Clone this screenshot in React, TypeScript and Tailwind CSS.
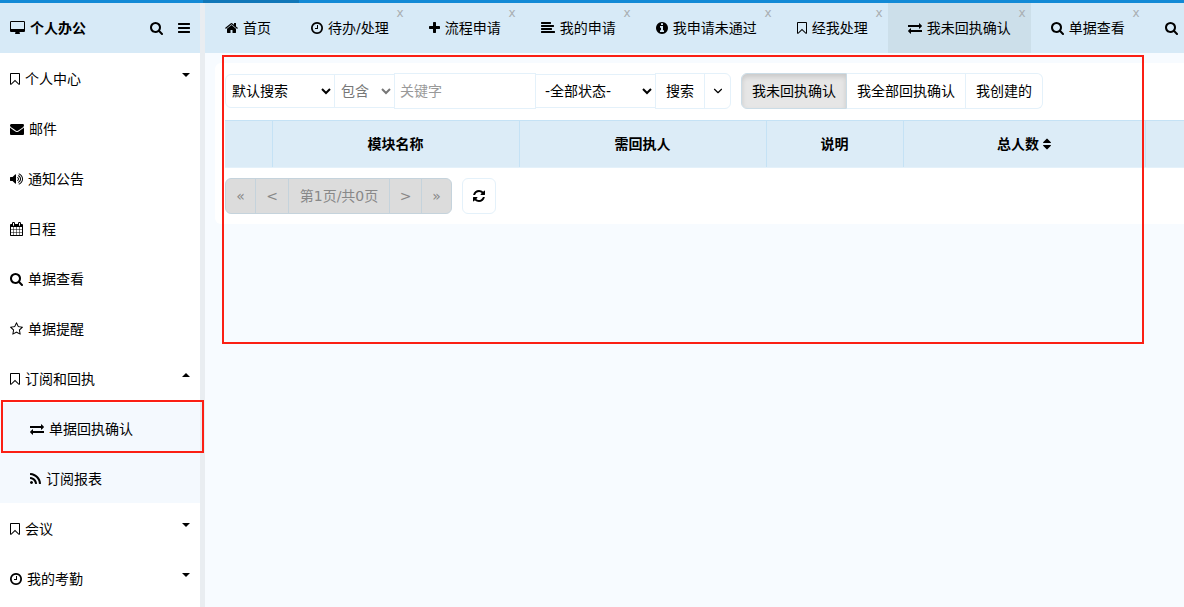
import type { ReactNode } from "react";
import { FiChevronDown } from "react-icons/fi";

type IconName = keyof typeof ICONS;

const CIRCLE = "q0 209-103 385.5t-279.5 279.5-385.5 103-385.5-103-279.5-279.5-103-385.5 103-385.5 279.5-279.5 385.5-103 385.5 103 279.5 279.5 103 385.5z";

// x = left edge of the glyph, w = advance width, on a 1792 unit em
const ICONS = {
  desktop: { x: -64, w: 1920, d: "M1728 992v-832q0-13-9.500-22.500t-22.500-9.500h-1600q-13 0-22.500 9.500t-9.500 22.500v832q0 13 9.500 22.500t22.500 9.500h1600q13 0 22.500-9.500t9.500-22.500zm128-832v1088q0 66-47 113t-113 47h-544q0 37 16 77.500t32 71 16 43.500q0 26-19 45t-45 19h-512q-26 0-45-19t-19-45q0-14 16-44t32-70 16-78h-544q-66 0-113-47t-47-113v-1088q0-66 47-113t113-47h1600q66 0 113 47t47 113z" },
  search: { x: 64, w: 1664, d: "M1216 832q0-185-131.500-316.500t-316.500-131.500-316.500 131.500-131.500 316.500 131.500 316.500 316.500 131.500 316.500-131.500 131.500-316.500zm512 832q0 52-38 90t-90 38q-54 0-90-38l-343-342q-179 124-399 124-143 0-273.500-55.500t-225-150-150-225-55.500-273.500 55.500-273.500 150-225 225-150 273.500-55.500 273.500 55.500 225 150 150 225 55.500 273.500q0 220-124 399l343 343q37 37 37 90z" },
  bars: { x: 128, w: 1536, d: "M1664 1344v128q0 26-19 45t-45 19h-1408q-26 0-45-19t-19-45v-128q0-26 19-45t45-19h1408q26 0 45 19t19 45zm0-512v128q0 26-19 45t-45 19h-1408q-26 0-45-19t-19-45v-128q0-26 19-45t45-19h1408q26 0 45 19t19 45zm0-512v128q0 26-19 45t-45 19h-1408q-26 0-45-19t-19-45v-128q0-26 19-45t45-19h1408q26 0 45 19t19 45z" },
  bookmark: { x: 256, w: 1280, d: "M1408 256h-1024v1242l423-406 89-85 89 85 423 406v-1242zm12-128q23 0 44 9 33 13 52.500 41t19.500 62v1289q0 34-19.500 62t-52.500 41q-19 8-44 8-48 0-83-32l-441-424-441 424q-36 33-83 33-23 0-44-9-33-13-52.500-41t-19.500-62v-1289q0-34 19.500-62t52.500-41q21-9 44-9h1048z" },
  envelope: { x: 0, w: 1792, d: "M1792 710v794q0 66-47 113t-113 47h-1472q-66 0-113-47t-47-113v-794q44 49 101 87 362 246 497 345 57 42 92.500 65.500t94.500 48 110 24.500h2q51 0 110-24.500t94.500-48 92.500-65.500q170-123 498-345 57-39 100-87zm0-294q0 79-49 151t-122 123q-376 261-468 325-10 7-42.500 30.500t-54 38-52 32.500-57.500 27-50 9h-2q-23 0-50-9t-57.500-27-52-32.500-54-38-42.500-30.500q-91-64-262-182.500t-205-142.500q-62-42-117-115.500t-55-136.500q0-78 41.500-130t118.500-52h1472q65 0 112.500 47t47.500 113z" },
  volume: { x: 64, w: 1664, d: "M832 352v1088q0 26-19 45t-45 19-45-19l-333-333h-262q-26 0-45-19t-19-45v-384q0-26 19-45t45-19h262l333-333q19-19 45-19t45 19 19 45zm384 544q0 76-42.500 141.500t-112.500 93.500q-10 5-25 5-26 0-45-18.500t-19-45.500q0-21 12-35.500t29-25 34-23 29-36 12-56.500-12-56.500-29-36-34-23-29-25-12-35.500q0-27 19-45.500t45-18.500q15 0 25 5 70 27 112.500 93t42.500 142zm256 0q0 153-85 282.500t-225 188.500q-13 5-25 5-27 0-46-19t-19-45q0-39 39-59 56-29 76-44 74-54 115.500-135.500t41.500-173.500-41.500-173.500-115.500-135.500q-20-15-76-44-39-20-39-59 0-26 19-45t45-19q13 0 26 5 140 59 225 188.500t85 282.500zm256 0q0 230-127 422.500t-338 283.500q-13 5-26 5-26 0-45-19t-19-45q0-36 39-59 7-4 22.500-10.500t22.500-10.500q46-25 82-51 123-91 192-227t69-289-69-289-192-227q-36-26-82-51-7-4-22.500-10.500t-22.500-10.500q-39-23-39-59 0-26 19-45t45-19q13 0 26 5 211 91 338 283.500t127 422.500z" },
  calendar: { x: 64, w: 1664, d: "M192 1664h288v-288h-288v288zm352 0h320v-288h-320v288zm-352-352h288v-320h-288v320zm352 0h320v-320h-320v320zm-352-384h288v-288h-288v288zm736 736h320v-288h-320v288zm-384-736h320v-288h-320v288zm768 736h288v-288h-288v288zm-384-352h320v-320h-320v320zm-352-864v-288q0-13-9.500-22.500t-22.500-9.500h-64q-13 0-22.500 9.500t-9.500 22.500v288q0 13 9.500 22.500t22.500 9.500h64q13 0 22.500-9.500t9.500-22.500zm736 864h288v-320h-288v320zm-384-384h320v-288h-320v288zm384 0h288v-288h-288v288zm32-480v-288q0-13-9.500-22.500t-22.500-9.500h-64q-13 0-22.500 9.500t-9.500 22.500v288q0 13 9.500 22.500t22.500 9.500h64q13 0 22.500-9.500t9.500-22.500zm384-64v1280q0 52-38 90t-90 38h-1408q-52 0-90-38t-38-90v-1280q0-52 38-90t90-38h128v-96q0-66 47-113t113-47h64q66 0 113 47t47 113v96h384v-96q0-66 47-113t113-47h64q66 0 113 47t47 113v96h128q52 0 90 38t38 90z" },
  star: { x: 64, w: 1664, d: "M1201 1004l306-297-422-62-189-382-189 382-422 62 306 297-73 421 378-199 377 199zm527-357q0 22-26 48l-363 354 86 500q1 7 1 20 0 50-41 50-19 0-40-12l-449-236-449 236q-22 12-40 12-21 0-31.500-14.500t-10.500-35.500q0-6 2-20l86-500-364-354q-25-27-25-48 0-37 56-46l502-73 225-455q19-41 49-41t49 41l225 455 502 73q56 9 56 46z" },
  exchange: { x: 0, w: 1792, d: "M1792 1184v192q0 13-9.500 22.500t-22.500 9.500h-1376v192q0 13-9.500 22.500t-22.500 9.500q-12 0-24-10l-319-320q-9-9-9-22 0-14 9-23l320-320q9-9 23-9 13 0 22.500 9.500t9.500 22.500v192h1376q13 0 22.500 9.500t9.500 22.500zm0-544q0 14-9 23l-320 320q-9 9-23 9-13 0-22.500-9.500t-9.500-22.500v-192h-1376q-13 0-22.500-9.500t-9.500-22.500v-192q0-13 9.500-22.500t22.500-9.500h1376v-192q0-14 9-23t23-9q12 0 24 10l319 319q9 9 9 23z" },
  rss: { x: 192, w: 1408, d: "M576 1344q0 80-56 136t-136 56-136-56-56-136 56-136 136-56 136 56 56 136zm512 123q2 28-17 48-18 21-47 21h-135q-25 0-43-16.500t-20-41.500q-22-229-184.500-391.500t-391.500-184.500q-25-2-41.500-20t-16.500-43v-135q0-29 21-47 17-17 43-17h5q160 13 306 80.500t259 181.500q114 113 181.500 259t80.500 306zm512 2q2 27-18 47-18 20-46 20h-143q-26 0-44.500-17.500t-19.500-42.500q-12-215-101-408.500t-231.500-336-336-231.500-408.500-102q-25-1-42.500-19.500t-17.500-43.500v-143q0-28 20-46 18-18 44-18h3q262 13 501.500 120t425.500 294q187 186 294 425.500t120 501.500z" },
  clock: { x: 128, w: 1536, d: "M1024 544v448q0 14-9 23t-23 9h-320q-14 0-23-9t-9-23v-64q0-14 9-23t23-9h224v-352q0-14 9-23t23-9h64q14 0 23 9t9 23zm416 352q0-148-73-273t-198-198-273-73-273 73-198 198-73 273 73 273 198 198 273 73 273-73 198-198 73-273zm224 0" + CIRCLE },
  home: { x: 64, w: 1664, d: "M1472 992v480q0 26-19 45t-45 19h-384v-384h-256v384h-384q-26 0-45-19t-19-45v-480q0-1 .5-3t.5-3l575-474 575 474q1 2 1 6zm223-69l-62 74q-8 9-21 11h-3q-13 0-21-7l-692-577-692 577q-12 8-24 7-13-2-21-11l-62-74q-8-10-7-23.500t11-21.500l719-599q32-26 76-26t76 26l244 204v-195q0-14 9-23t23-9h192q14 0 23 9t9 23v408l219 182q10 8 11 21.500t-7 23.500z" },
  plus: { x: 192, w: 1408, d: "M1600 736v192q0 40-28 68t-68 28h-416v416q0 40-28 68t-68 28h-192q-40 0-68-28t-28-68v-416h-416q-40 0-68-28t-28-68v-192q0-40 28-68t68-28h416v-416q0-40 28-68t68-28h192q40 0 68 28t28 68v416h416q40 0 68 28t28 68z" },
  align: { x: 0, w: 1792, d: "M1792 1344v128q0 26-19 45t-45 19h-1664q-26 0-45-19t-19-45v-128q0-26 19-45t45-19h1664q26 0 45 19t19 45zm-384-384v128q0 26-19 45t-45 19h-1280q-26 0-45-19t-19-45v-128q0-26 19-45t45-19h1280q26 0 45 19t19 45zm256-384v128q0 26-19 45t-45 19h-1536q-26 0-45-19t-19-45v-128q0-26 19-45t45-19h1536q26 0 45 19t19 45zm-384-384v128q0 26-19 45t-45 19h-1152q-26 0-45-19t-19-45v-128q0-26 19-45t45-19h1152q26 0 45 19t19 45z" },
  info: { x: 128, w: 1536, d: "M1152 1376v-160q0-14-9-23t-23-9h-96v-512q0-14-9-23t-23-9h-320q-14 0-23 9t-9 23v160q0 14 9 23t23 9h96v320h-96q-14 0-23 9t-9 23v160q0 14 9 23t23 9h448q14 0 23-9t9-23zm-128-896v-160q0-14-9-23t-23-9h-192q-14 0-23 9t-9 23v160q0 14 9 23t23 9h192q14 0 23-9t9-23zm640 416" + CIRCLE },
  refresh: { x: 128, w: 1536, d: "M1639 1056q0 5-1 7-64 268-268 434.500t-478 166.500q-146 0-282.500-55t-243.500-157l-129 129q-19 19-45 19t-45-19-19-45v-448q0-26 19-45t45-19h448q26 0 45 19t19 45-19 45l-137 137q71 66 161 102t187 36q134 0 250-65t186-179q11-17 53-117 8-23 30-23h192q13 0 22.500 9.500t9.500 22.500zm25-800v448q0 26-19 45t-45 19h-448q-26 0-45-19t-19-45 19-45l138-138q-148-137-349-137-134 0-250 65t-186 179q-11 17-53 117-8 23-30 23h-199q-13 0-22.500-9.500t-9.500-22.500v-7q65-268 270-434.500t480-166.500q146 0 284 55.500t245 156.500l130-129q19-19 45-19t45 19 19 45z" },
  sort: { x: 384, w: 1024, d: "M1408 1088q0 26-19 45l-448 448q-19 19-45 19t-45-19l-448-448q-19-19-19-45t19-45 45-19h896q26 0 45 19t19 45zm0-384q0 26-19 45t-45 19h-896q-26 0-45-19t-19-45 19-45l448-448q19-19 45-19t45 19l448 448q19 19 19 45z" },
};

function Icon({ name }: { name: IconName }) {
  const { x, w, d } = ICONS[name];
  return (
    <svg viewBox={`${x} 0 ${w} 1792`} width={w / 128} height={14} fill="currentColor" className="shrink-0" aria-hidden="true">
      <path d={d} />
    </svg>
  );
}

function Caret({ up }: { up?: boolean }) {
  return (
    <svg viewBox="0 0 8 4" width={8} height={4} className="mb-2 ml-auto" aria-hidden="true">
      <path d={up ? "M0 4L4 0L8 4z" : "M0 0L4 4L8 0z"} />
    </svg>
  );
}

type MenuItem = { icon: IconName; label: string; open?: boolean; children?: MenuItem[] };

const MENU: MenuItem[] = [
  { icon: "bookmark", label: "个人中心", children: [] },
  { icon: "envelope", label: "邮件" },
  { icon: "volume", label: "通知公告" },
  { icon: "calendar", label: "日程" },
  { icon: "search", label: "单据查看" },
  { icon: "star", label: "单据提醒" },
  {
    icon: "bookmark",
    label: "订阅和回执",
    open: true,
    children: [
      { icon: "exchange", label: "单据回执确认" },
      { icon: "rss", label: "订阅报表" },
    ],
  },
  { icon: "bookmark", label: "会议", children: [] },
  { icon: "clock", label: "我的考勤", children: [] },
];

const TABS: { icon: IconName; label: string; fixed?: boolean; active?: boolean }[] = [
  { icon: "home", label: "首页", fixed: true },
  { icon: "clock", label: "待办/处理" },
  { icon: "plus", label: "流程申请" },
  { icon: "align", label: "我的申请" },
  { icon: "info", label: "我申请未通过" },
  { icon: "bookmark", label: "经我处理" },
  { icon: "exchange", label: "我未回执确认", active: true },
  { icon: "search", label: "单据查看" },
];

function Sidebar() {
  return (
    <aside className="w-[205px] shrink-0 border-r-5 border-[#e9edf1] bg-white">
      <div className="flex h-[50px] items-center gap-[5px] bg-[#d7eaf7] px-[10px] font-bold">
        <Icon name="desktop" />
        <span>个人办公</span>
        <button aria-label="搜索菜单" className="ml-auto">
          <Icon name="search" />
        </button>
        <button aria-label="收起菜单" className="ml-[10px]">
          <Icon name="bars" />
        </button>
      </div>
      <nav>
        <ul>
          {MENU.map((m) => (
            <li key={m.label}>
              <a href="#" className="flex h-[50px] items-center gap-[5px] px-[10px] pt-[2px]">
                <Icon name={m.icon} />
                {m.label}
                {m.children && <Caret up={m.open} />}
              </a>
              {m.open && (
                <ul className="bg-[#f4f9fe]">
                  {m.children?.map((c) => (
                    <li key={c.label}>
                      <a href="#" className="flex h-[50px] items-center gap-[5px] pt-[2px] pl-[30px]">
                        <Icon name={c.icon} />
                        {c.label}
                      </a>
                    </li>
                  ))}
                </ul>
              )}
            </li>
          ))}
        </ul>
      </nav>
    </aside>
  );
}

function TabBar() {
  return (
    <nav className="flex h-[50px] overflow-hidden bg-[#d7eaf7]">
      {TABS.map((t) => (
        <div key={t.label} className={t.active ? "relative shrink-0 bg-[#ccdfea]" : "relative shrink-0"}>
          <a href="#" className="flex h-full items-center gap-[5px] px-5 whitespace-nowrap">
            <Icon name={t.icon} />
            {t.label}
          </a>
          {!t.fixed && (
            <button aria-label={`关闭${t.label}`} className="absolute top-0 right-[5px] text-xs leading-5 text-[#a9aeb2]">
              x
            </button>
          )}
        </div>
      ))}
      <a href="#" aria-label="搜索" className="flex shrink-0 items-center px-5">
        <Icon name="search" />
      </a>
    </nav>
  );
}

function Th({ className, children }: { className?: string; children?: ReactNode }) {
  return (
    <th className={`h-[47px] border-r border-b border-[#c5e2f5] border-b-[#e4f1fa] font-bold ${className ?? ""}`}>{children}</th>
  );
}

function Toolbar() {
  return (
    <div className="flex h-9 items-center whitespace-nowrap">
      <select aria-label="搜索方式" className="h-[34px] w-[110px] rounded-l-md border border-[#e4f1fa] bg-white px-[2px]">
        <option>默认搜索</option>
      </select>
      <select aria-label="匹配方式" disabled className="-ml-px h-[34px] w-[61px] border border-[#e4f1fa] bg-white px-[2px] text-[#777]">
        <option>包含</option>
      </select>
      <input aria-label="关键字" placeholder="关键字" className="-ml-px h-9 w-[142px] border border-[#e4f1fa] px-[5px] placeholder:text-[#999]" />
      <select aria-label="状态" className="-ml-px h-[34px] w-[121px] border border-[#e4f1fa] bg-white px-[5px]">
        <option>-全部状态-</option>
      </select>
      <button className="-ml-px h-9 border border-[#e4f1fa] px-[10px]">搜索</button>
      <button aria-label="更多搜索条件" className="-ml-px flex h-9 w-[27px] items-center justify-center rounded-r-md border border-[#e4f1fa]">
        <FiChevronDown size={14} />
      </button>
      <div className="ml-[10px] flex">
        <button className="h-9 rounded-l-md border border-[#cbdce6] bg-[#e6e6e6] px-[10px] shadow-[inset_0_3px_5px_rgba(0,0,0,0.125)]">
          我未回执确认
        </button>
        <button className="h-9 border-y border-r border-[#e4f1fa] px-[10px]">我全部回执确认</button>
        <button className="h-9 rounded-r-md border-y border-r border-[#e4f1fa] px-[10px]">我创建的</button>
      </div>
    </div>
  );
}

function Pager() {
  return (
    <div className="mt-[10px] flex gap-[10px]">
      <div className="flex h-9 divide-x divide-[#c5d3dc] overflow-hidden rounded-md border border-[#c5d3dc] bg-[#dcdcdc] text-[#888]">
        <button disabled aria-label="首页" className="w-[30px]">«</button>
        <button disabled aria-label="上一页" className="w-[33px]">&lt;</button>
        <button disabled className="w-[101px]">第1页/共0页</button>
        <button disabled aria-label="下一页" className="w-8">&gt;</button>
        <button disabled aria-label="末页" className="w-[29px]">»</button>
      </div>
      <button aria-label="刷新" className="flex h-9 w-[34px] items-center justify-center rounded-md border border-[#e4f1fa]">
        <Icon name="refresh" />
      </button>
    </div>
  );
}

export default function App() {
  return (
    <div className="relative flex h-screen flex-col overflow-hidden bg-[#f7fbff] font-['DejaVu_Sans','Noto_Sans_CJK_SC',sans-serif] text-sm leading-5 text-black">
      <div className="flex h-[3px] shrink-0 bg-[#128ad6]">
        <div className="ml-[203px] w-24 bg-[#1177b8]" />
      </div>
      <div className="flex min-h-0 flex-1">
        <Sidebar />
        <div className="min-w-0 flex-1">
          <TabBar />
          <main className="mt-[10px] ml-[10px] overflow-hidden rounded-l-md bg-white py-[10px] pl-[10px]">
            <Toolbar />
            <table className="mt-[11px] w-[1200px] table-fixed border-collapse border-t border-[#c5e2f5] bg-[#dcecf7]">
              <thead>
                <tr>
                  <Th className="w-[47px]" />
                  <Th className="w-[247px]">模块名称</Th>
                  <Th className="w-[247px]">需回执人</Th>
                  <Th className="w-[137px]">说明</Th>
                  <Th className="w-[242px]">
                    <span className="inline-flex items-center gap-1">
                      总人数
                      <Icon name="sort" />
                    </span>
                  </Th>
                  <Th />
                </tr>
              </thead>
            </table>
            <Pager />
          </main>
        </div>
      </div>
      <div className="pointer-events-none absolute top-[55px] right-10 left-[222px] h-[289px] border-2 border-[#fb1f14]" />
      <div className="pointer-events-none absolute top-[400px] left-px h-[53px] w-[203px] border-2 border-[#fb1f14]" />
    </div>
  );
}
